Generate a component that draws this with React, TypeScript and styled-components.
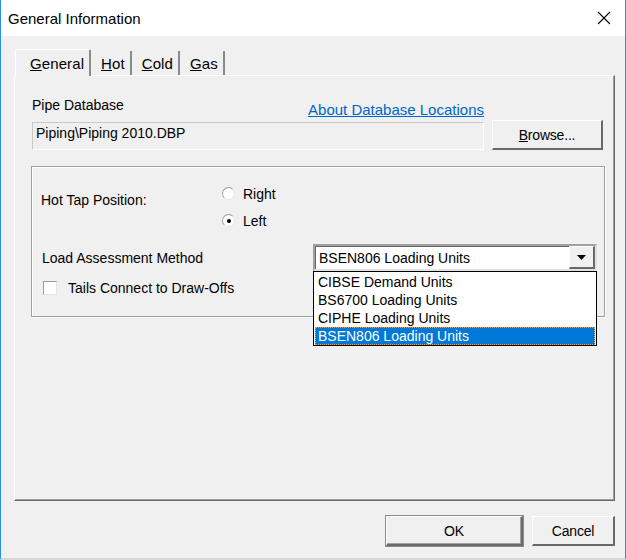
import React from "react";
import styled, { createGlobalStyle } from "styled-components";

const Global = createGlobalStyle`
  html, body { margin: 0; padding: 0; background: #f0f0f0; }
  body { font-family: "Liberation Sans", Arial, sans-serif; font-size: 14px; color: #000; }
  #root { width: 626px; height: 560px; }
`;

const Window = styled.div`
  box-sizing: border-box;
  width: 626px;
  height: 560px;
  display: flex;
  flex-direction: column;
  background: #f0f0f0;
  border-left: 1px solid #2b8fe6;
  border-right: 1px solid #2b8fe6;
  border-bottom: 2px solid #d6d6d6;
`;

const TitleBar = styled.div`
  height: 36px;
  flex: none;
  background: #fff;
  display: flex;
  align-items: center;
  justify-content: space-between;
  padding: 0 14px 0 7px;
`;

const Title = styled.span`
  font-size: 15px;
  color: #000;
`;

const CloseIcon = styled.svg`
  width: 14px;
  height: 14px;
`;

const Body = styled.div`
  flex: 1;
  display: flex;
  flex-direction: column;
  padding: 12px 10px 0 13px;
`;

const TabStrip = styled.div`
  display: flex;
  align-items: flex-end;
  height: 27px;
  padding-left: 1px;
`;

const Tab = styled.div<{ $active?: boolean }>`
  box-sizing: border-box;
  height: ${(p) => (p.$active ? "27px" : "24px")};
  padding: 0 5px 0 ${(p) => (p.$active ? "14px" : "10px")};
  display: flex;
  align-items: center;
  font-size: 15px;
  letter-spacing: 0.1px;
  border-right: 2px solid #8a8a8a;
  ${(p) =>
    p.$active
      ? `border-top: 1px solid #fff; border-left: 1px solid #fff; border-radius: 2px 2px 0 0; margin-bottom: -1px; background:#f0f0f0; position: relative; z-index: 1;`
      : ``}
  u { text-decoration: underline; }
`;

const Panel = styled.div`
  box-sizing: border-box;
  height: 426px;
  border-top: 1px solid #fff;
  border-left: 1px solid #fff;
  border-right: 1px solid #696969;
  border-bottom: 1px solid #696969;
  box-shadow: inset -1px -1px 0 #a0a0a0;
  padding: 21px 10px 0 17px;
`;

const DbGrid = styled.div`
  display: grid;
  grid-template-columns: 452px 111px;
  column-gap: 8px;
  align-items: center;
`;

const DbHead = styled.div`
  display: flex;
  justify-content: space-between;
  align-items: flex-start;
  height: 23px;
`;

const Label = styled.span`
  font-size: 14px;
  white-space: nowrap;
`;

const Link = styled.a`
  color: #0066cc;
  text-decoration: underline;
  font-size: 15px;
  margin-top: 4px;
`;

const Field = styled.div`
  box-sizing: border-box;
  height: 28px;
  border: 1px solid #c9c9c9;
  border-right-color: #fff;
  border-bottom-color: #fff;
  background: #f0f0f0;
  padding: 0 3px;
  display: flex;
  align-items: flex-start;
  padding-top: 2px;
  font-size: 14px;
  margin-top: 1px;
`;

const Button = styled.button<{ $w: number; $default?: boolean }>`
  box-sizing: border-box;
  width: ${(p) => p.$w}px;
  height: 30px;
  background: #f0f0f0;
  font-family: "Liberation Sans", Arial, sans-serif;
  font-size: 14px;
  color: #000;
  border: none;
  border-top: 1px solid #fff;
  border-left: 1px solid #fff;
  border-right: 2px solid #696969;
  border-bottom: 2px solid #696969;
  box-shadow: inset -1px -1px 0 #a0a0a0, ${(p) => (p.$default ? "0 0 0 1px #8a8a8a" : "none")};
  padding: 0;
  letter-spacing: -0.2px;
  u { text-decoration: underline; }
`;

const Group = styled.div`
  box-sizing: border-box;
  margin-top: 16px;
  margin-left: -1px;
  width: 574px;
  height: 151px;
  border: 1px solid #a0a0a0;
  box-shadow: inset 1px 1px 0 #fff, 1px 1px 0 #fff;
  padding: 12px 7px 0 9px;
  display: flex;
  flex-direction: column;
`;

const HotRow = styled.div`
  display: flex;
  align-items: center;
  height: 56px;
`;

const HotLabel = styled(Label)`
  width: 181px;
  margin-top: -14px;
`;

const RadioGroup = styled.div`
  display: flex;
  flex-direction: column;
  gap: 10px;
`;

const RadioItem = styled.div`
  display: flex;
  align-items: center;
  gap: 8px;
  height: 17px;
`;

const RadioCircle = styled.span<{ $checked?: boolean }>`
  box-sizing: border-box;
  width: 13px;
  height: 13px;
  border-radius: 50%;
  background: #fff;
  border: 1px solid #9a9a9a;
  border-right-color: #e6e6e6;
  border-bottom-color: #e6e6e6;
  display: flex;
  align-items: center;
  justify-content: center;
  &::after {
    content: "";
    width: 4px;
    height: 4px;
    border-radius: 50%;
    background: ${(p) => (p.$checked ? "#000" : "transparent")};
  }
`;

const LoadRow = styled.div`
  display: flex;
  align-items: center;
  justify-content: space-between;
  margin-top: 9px;
  height: 27px;
`;

const LoadLabel = styled(Label)`
  margin-left: 1px;
  margin-top: 1px;
`;

const ComboWrap = styled.div`
  position: relative;
  width: 284px;
`;

const Combo = styled.div`
  box-sizing: border-box;
  height: 27px;
  background: #fff;
  border: 2px solid #a0a0a0;
  border-right-color: #e3e3e3;
  border-bottom-color: #e3e3e3;
  box-shadow: inset 1px 1px 0 #696969;
  display: flex;
  align-items: center;
  padding-left: 4px;
  font-size: 14px;
`;

const ComboText = styled.span`
  flex: 1;
`;

const DropBtn = styled.span`
  box-sizing: border-box;
  width: 26px;
  height: 23px;
  background: #f0f0f0;
  border-top: 1px solid #fff;
  border-left: 1px solid #fff;
  border-right: 2px solid #696969;
  border-bottom: 2px solid #696969;
  display: flex;
  align-items: center;
  justify-content: center;
`;

const DropList = styled.div`
  position: absolute;
  top: 27px;
  left: 0;
  right: 0;
  box-sizing: border-box;
  background: #fff;
  border: 1px solid #000;
  display: flex;
  flex-direction: column;
  padding: 1px 1px 0 1px;
  z-index: 5;
`;

const DropItem = styled.div<{ $selected?: boolean }>`
  height: 18px;
  line-height: 18px;
  padding-left: 3px;
  font-size: 14px;
  color: ${(p) => (p.$selected ? "#fff" : "#000")};
  background: ${(p) => (p.$selected ? "#0078d7" : "#fff")};
  outline: ${(p) => (p.$selected ? "1px dotted #e0a060" : "none")};
  outline-offset: -1px;
`;

const CheckRow = styled.div`
  display: flex;
  align-items: center;
  gap: 11px;
  margin-top: 8px;
  margin-left: 2px;
  height: 18px;
`;

const CheckBox = styled.span`
  box-sizing: border-box;
  width: 14px;
  height: 14px;
  background: #fff;
  border: 1px solid #9a9a9a;
  border-right-color: #e3e3e3;
  border-bottom-color: #e3e3e3;
`;

const Footer = styled.div`
  display: flex;
  justify-content: flex-end;
  gap: 9px;
  margin-top: 15px;
`;

export default function App() {
  return (
    <>
      <Global />
      <Window>
        <TitleBar>
          <Title>General Information</Title>
          <CloseIcon viewBox="0 0 14 14">
            <path d="M1 1 L13 13 M13 1 L1 13" stroke="#000" strokeWidth="1.1" fill="none" />
          </CloseIcon>
        </TitleBar>
        <Body>
          <TabStrip>
            <Tab $active>
              <span>
                <u>G</u>eneral
              </span>
            </Tab>
            <Tab>
              <span>
                <u>H</u>ot
              </span>
            </Tab>
            <Tab>
              <span>
                <u>C</u>old
              </span>
            </Tab>
            <Tab>
              <span>
                <u>G</u>as
              </span>
            </Tab>
          </TabStrip>
          <Panel>
            <DbGrid>
              <DbHead>
                <Label>Pipe Database</Label>
                <Link>About Database Locations</Link>
              </DbHead>
              <div />
              <Field>Piping\Piping 2010.DBP</Field>
              <Button $w={111}>
                <u>B</u>rowse...
              </Button>
            </DbGrid>
            <Group>
              <HotRow>
                <HotLabel>Hot Tap Position:</HotLabel>
                <RadioGroup>
                  <RadioItem>
                    <RadioCircle />
                    <Label>Right</Label>
                  </RadioItem>
                  <RadioItem>
                    <RadioCircle $checked />
                    <Label>Left</Label>
                  </RadioItem>
                </RadioGroup>
              </HotRow>
              <LoadRow>
                <LoadLabel>Load Assessment Method</LoadLabel>
                <ComboWrap>
                  <Combo>
                    <ComboText>BSEN806 Loading Units</ComboText>
                    <DropBtn>
                      <svg width="9" height="5" viewBox="0 0 9 5">
                        <path d="M0 0 H9 L4.5 5 Z" fill="#000" />
                      </svg>
                    </DropBtn>
                  </Combo>
                  <DropList>
                    <DropItem>CIBSE Demand Units</DropItem>
                    <DropItem>BS6700 Loading Units</DropItem>
                    <DropItem>CIPHE Loading Units</DropItem>
                    <DropItem $selected>BSEN806 Loading Units</DropItem>
                  </DropList>
                </ComboWrap>
              </LoadRow>
              <CheckRow>
                <CheckBox />
                <Label>Tails Connect to Draw-Offs</Label>
              </CheckRow>
            </Group>
          </Panel>
          <Footer>
            <Button $w={137} $default>
              OK
            </Button>
            <Button $w={83}>Cancel</Button>
          </Footer>
        </Body>
      </Window>
    </>
  );
}
